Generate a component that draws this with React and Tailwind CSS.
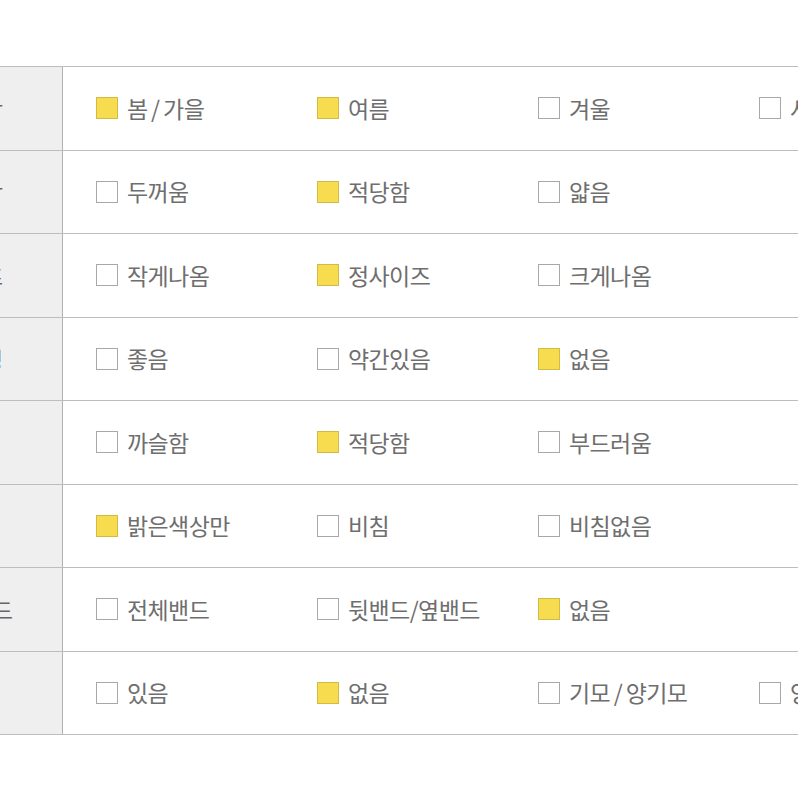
import React from "react";

const rows = [
  { label: "계절감", items: [["봄 / 가을", true], ["여름", true], ["겨울", false], ["사계절", false]] },
  { label: "두께감", items: [["두꺼움", false], ["적당함", true], ["얇음", false]] },
  { label: "사이즈", items: [["작게나옴", false], ["정사이즈", true], ["크게나옴", false]] },
  { label: "신축성", items: [["좋음", false], ["약간있음", false], ["없음", true]] },
  { label: "촉감", items: [["까슬함", false], ["적당함", true], ["부드러움", false]] },
  { label: "비침", items: [["밝은색상만", true], ["비침", false], ["비침없음", false]] },
  { label: "허리밴드", items: [["전체밴드", false], ["뒷밴드/옆밴드", false], ["없음", true]] },
  { label: "안감", items: [["있음", false], ["없음", true], ["기모 / 양기모", false], ["양털", false]] },
];

function Box({ on }) {
  return (
    <span
      className={
        "inline-block w-[22px] h-[22px] shrink-0 border " +
        (on ? "bg-[#f6dc4e] border-[#d2bb45]" : "bg-white border-[#a8a8a8]")
      }
    />
  );
}

export default function App() {
  return (
    <div
      className="w-[798px] h-[798px] bg-white overflow-hidden pt-[66px]"
      style={{ fontFamily: '"Noto Sans CJK KR", "Noto Sans", sans-serif' }}
    >
      <div className="ml-[-116px] w-[1100px] border-t border-[#bdbdbd]">
        {rows.map((r, i) => (
          <div key={i} className="flex h-[83.5px] border-b border-[#bdbdbd]">
            <div className="w-[179px] shrink-0 bg-[#efefef] border-r border-[#b0b0b0] flex items-center justify-center text-[22px] text-[#666] tracking-[-0.5px]">
              {r.label}
            </div>
            <div className="flex items-center pl-[33px]">
              {r.items.map(([t, on], j) => (
                <div key={j} className="w-[221px] shrink-0 flex items-center gap-[9px] text-[23px] text-[#6e6e6e] tracking-[-0.6px] [word-spacing:-1px]">
                  <Box on={on} />
                  <span className="leading-none">{t}</span>
                </div>
              ))}
            </div>
          </div>
        ))}
      </div>
    </div>
  );
}
